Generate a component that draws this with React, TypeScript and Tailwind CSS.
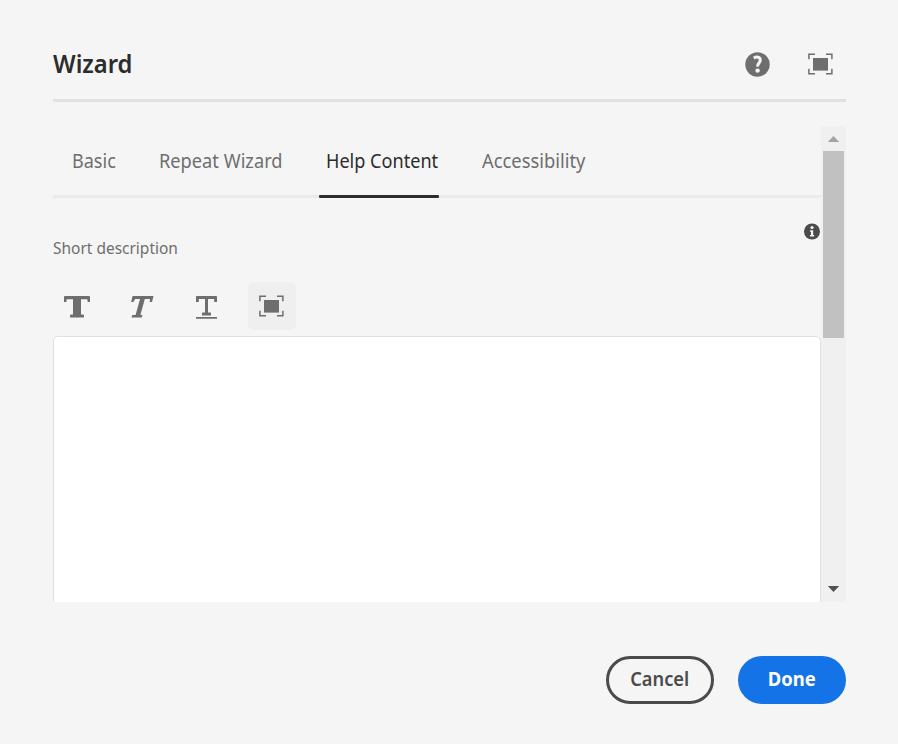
import React from 'react';

const tabs = [
  { label: 'Basic', box: 'ml-[19px] w-[87px]', scale: 'scale-x-[0.925]', active: false },
  { label: 'Repeat Wizard', box: 'w-[167px]', scale: 'scale-x-[0.935]', active: false },
  { label: 'Help Content', box: 'w-[156px]', scale: 'scale-x-[0.928]', active: true },
  { label: 'Accessibility', box: 'w-[120px]', scale: 'scale-x-[0.94]', active: false },
];

function FullScreenIcon() {
  return (
    <svg width="26" height="22" viewBox="0 0 26 22" className="block text-[#6e6e6e]" fill="none" stroke="currentColor" strokeWidth="1.5">
      <rect x="6" y="5" width="15" height="12.6" fill="currentColor" stroke="none" />
      <path d="M1.900 6.200V1.200H8M19 1.200h5.900V6.200M24.900 15.800v5H19M8 20.800H1.900v-5" />
    </svg>
  );
}

function HelpIcon() {
  return (
    <svg width="25" height="25" viewBox="0 0 25 25" className="block">
      <circle cx="12.5" cy="12.5" r="12.2" fill="#6e6e6e" />
      <path d="M8.800 6.100C11.800 4.300 15.300 4.900 15.300 7.900c0 3-3 3.400-2.700 6.700" fill="none" stroke="#f5f5f5" strokeWidth="3" />
      <circle cx="12.6" cy="18.6" r="2.2" fill="#f5f5f5" />
    </svg>
  );
}

function InfoIcon() {
  return (
    <svg width="16" height="17" viewBox="0 0 16 17" className="block">
      <circle cx="8" cy="8.5" r="8" fill="#4b4b4b" />
      <circle cx="8" cy="4.5" r="1.6" fill="#f5f5f5" />
      <path d="M6 7.300h3.200v4.600h1v1.600H6v-1.600h1V8.800H6z" fill="#f5f5f5" />
    </svg>
  );
}

function BoldIcon() {
  return (
    <svg width="26" height="22" viewBox="0 0 26 22" className="block" fill="#6e6e6e">
      <path d="M1 0h24a1 1 0 0 1 1 1v5h-2.400V4.200a1 1 0 0 0-1-1H17v15.400h2a1 1 0 0 1 1 1V21.500H6v-1.900a1 1 0 0 1 1-1h2V3.200H3.400a1 1 0 0 0-1 1V6H0V1a1 1 0 0 1 1-1z" />
    </svg>
  );
}

function ItalicIcon() {
  return (
    <svg width="24" height="22" viewBox="0 0 24 22" className="block" fill="#6e6e6e">
      <path d="M3.200 0H23.500L22 6h-2.300l.3-3.100h-5.200L10.400 19h2.100l-.8 2.500H1.500l.8-2.500h3.300L10 2.900H5.200L3.400 6H1.200L2.300.8Q2.500 0 3.200 0z" />
    </svg>
  );
}

function UnderlineIcon() {
  return (
    <svg width="22" height="24" viewBox="0 0 22 24" className="block" fill="#6e6e6e">
      <path d="M.8 0h19.400a.8.8 0 0 1 .8.8V6h-2.800V3h-6.200v13.500h2.200a.8.8 0 0 1 .8.8V19.500H6v-2.200a.8.8 0 0 1 .8-.8H9V3H2.800v3H0V.8A.8.8 0 0 1 .8 0zM0 21.100h21v1.600H0z" />
    </svg>
  );
}

export default function App() {
  return (
    <div className="flex h-[744px] w-[898px] flex-col overflow-hidden bg-[#f5f5f5] pr-[52px] pl-[53px] font-['Noto_Sans',sans-serif]">
      <header className="flex h-[102px] shrink-0 items-center justify-between border-b-[3px] border-[#e1e1e1] pt-[29px] pr-[13px]">
        <h1 className="-mt-[2px] origin-left scale-x-[0.95] text-[25px] leading-[34px] font-semibold text-[#2c2c2c]">Wizard</h1>
        <div className="flex items-center gap-[37px]">
          <HelpIcon />
          <FullScreenIcon />
        </div>
      </header>

      <div className="mt-6 flex h-[476px] shrink-0 overflow-hidden">
        <main className="flex w-[768px] shrink-0 flex-col">
          <nav className="flex h-[72px] shrink-0 border-b-[3px] border-[#eaeaea]">
            {tabs.map((tab) => (
              <div key={tab.label} className={`${tab.box} relative shrink-0 pt-[21px]`}>
                <span className={`${tab.scale} ${tab.active ? 'text-[#2c2c2c]' : 'text-[#6e6e6e]'} inline-block origin-left text-[19.5px] leading-[28px] whitespace-nowrap`}>
                  {tab.label}
                </span>
                {tab.active && <span className="absolute -bottom-[3px] -left-[7px] h-[3px] w-[120px] rounded-[1px] bg-[#2c2c2c]" />}
              </div>
            ))}
          </nav>
          <div className="flex h-[84px] shrink-0 justify-between">
            <label className="mt-[38px] origin-left scale-x-[0.91] text-[17px] leading-[24px] whitespace-nowrap text-[#6e6e6e]">Short description</label>
            <div className="mt-[25px] mr-px">
              <InfoIcon />
            </div>
          </div>
          <div className="flex h-12 shrink-0">
            <button className="flex h-12 w-[65px] pt-[14px] pl-[11px]"><BoldIcon /></button>
            <button className="flex h-12 w-[65px] pt-[14px] pl-[12px]"><ItalicIcon /></button>
            <button className="flex h-12 w-[65px] pt-[14px] pl-[13px]"><UnderlineIcon /></button>
            <button className="flex h-12 w-12 items-center justify-center rounded-[5px] bg-[#efefef] pr-[2px]"><FullScreenIcon /></button>
          </div>
          <div className="mt-[6px] h-[320px] shrink-0 rounded-[5px] border border-[#e1e1e1] bg-white" />
        </main>

        <aside className="flex w-[25px] shrink-0 flex-col items-center bg-[#f0f0f0]">
          <svg width="25" height="25" viewBox="0 0 25 25" className="block shrink-0"><path d="M12.500 10l5.700 6H6.800z" fill="#a3a3a3" /></svg>
          <div className="h-[187px] w-[21px] bg-[#c1c1c1]" />
          <svg width="25" height="25" viewBox="0 0 25 25" className="mt-auto block shrink-0"><path d="M6.800 9h11.400l-5.700 6z" fill="#505050" /></svg>
        </aside>
      </div>

      <footer className="mt-[54px] flex justify-end gap-6 text-[19px] font-bold">
        <button className="flex h-12 w-[108px] items-center justify-center rounded-full border-[3px] border-[#4b4b4b] pb-[2px] text-[#4b4b4b]">
          <span className="scale-x-[0.96] font-semibold">Cancel</span>
        </button>
        <button className="flex h-12 w-[108px] items-center justify-center rounded-full bg-[#1473e6] pb-[2px] text-white">
          <span className="scale-x-[0.97]">Done</span>
        </button>
      </footer>
    </div>
  );
}
